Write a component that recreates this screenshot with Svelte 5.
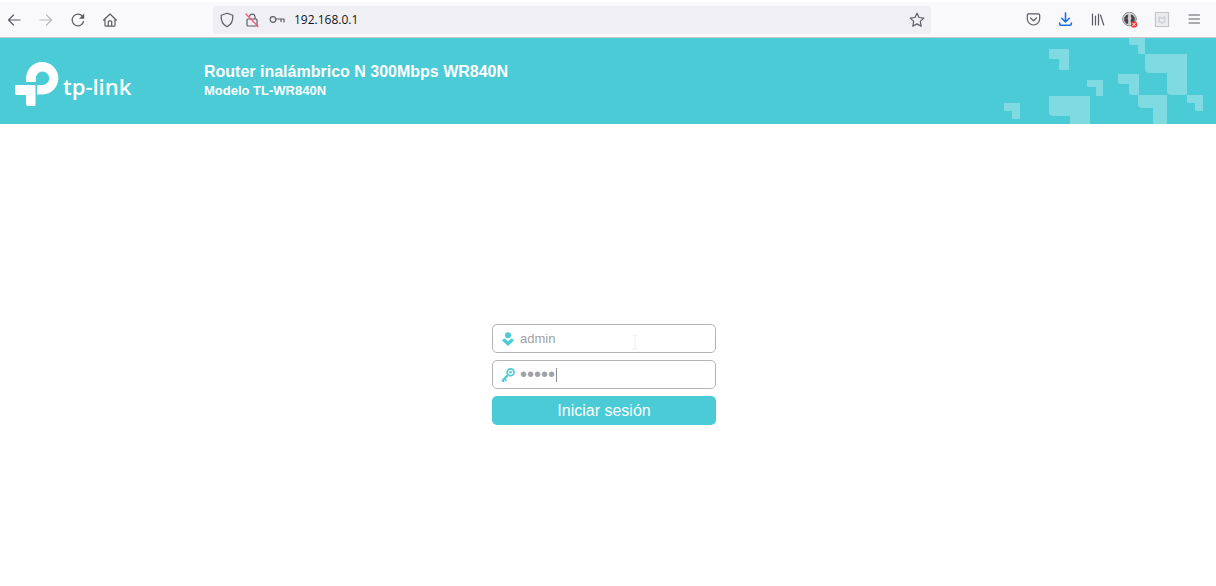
<script>
  let username = "admin";
  let password = "admin";

  const url = "192.168.0.1";

  // corner shaped tiles of the banner: left, top, right, bottom, inner x, inner y, radius
  const tiles = [
    [46, 11, 66, 32, 56, 21, 1],
    [84, 42, 100, 58, 93, 49, 1],
    [1, 65, 17, 81, 9, 73, 1],
    [46, 58, 87, 90, 67, 78, 4],
    [126, -2, 142, 16, 135, 7, 2],
    [142, 16, 184, 57, 164, 35, 4],
    [115, 36, 136, 57, 126, 46, 2],
    [135, 57, 164, 88, 150, 70, 4],
    [184, 57, 200, 73, 192, 65, 1],
  ];

  function tilePath([l, t, r, b, x, y, q]) {
    return `M${l} ${t}H${r}V${b}H${x + q}Q${x} ${b} ${x} ${b - q}V${y}H${l + q}Q${l} ${y} ${l} ${y - q}Z`;
  }
</script>

<div class="toolbar">
  <div class="group">
    <button type="button" aria-label="Atrás">
      <svg viewBox="0 0 16 16"><path d="M14 8H2.500M7.500 3L2.500 8l5 5" /></svg>
    </button>
    <button type="button" aria-label="Adelante" disabled>
      <svg viewBox="0 0 16 16"><path d="M2 8h11.500M8.500 3l5 5-5 5" /></svg>
    </button>
    <button type="button" aria-label="Recargar">
      <svg viewBox="0 0 16 16">
        <path d="M13.600 9.500A5.800 5.800 0 1 1 12.400 4.200" />
        <path class="solid" d="M14.200 1.500v5.200H9z" />
      </svg>
    </button>
    <button type="button" aria-label="Inicio">
      <svg viewBox="0 0 16 16">
        <path d="M1.500 8.200L8 2l6.500 6.200M3 7v6.200q0 1 1 1h8q1 0 1-1V7M6.300 14V9.800q0-1 1-1h1.400q1 0 1 1V14" />
      </svg>
    </button>
  </div>

  <div class="urlbar">
    <svg viewBox="0 0 16 16">
      <path d="M8 1.200L13.800 3.200C14.200 8.500 12.500 12.500 8 14.800 3.500 12.500 1.800 8.500 2.200 3.200Z" />
    </svg>
    <svg viewBox="0 0 16 16">
      <path d="M5.500 4.200a2.800 2.800 0 0 1 5.500 .500V7M4 7h8q1 0 1 1v5q0 1-1 1H4q-1 0-1-1V8q0-1 1-1Z" />
      <path class="strike" d="M2 2l12 12.500" />
    </svg>
    <svg viewBox="0 0 16 16">
      <circle cx="4" cy="7.500" r="2.800" />
      <path d="M7 7h8v3M12 7v2.500" />
    </svg>
    <input type="text" value={url} aria-label="Dirección" />
    <button type="button" aria-label="Añadir a marcadores">
      <svg viewBox="0 0 16 16">
        <path d="M8 1.200l2 4.300 4.800.600-3.500 3.300.900 4.800L8 11.900l-4.200 2.300.900-4.800L1.200 6.100 6 5.500Z" />
      </svg>
    </button>
  </div>

  <div class="group">
    <button type="button" aria-label="Guardar en Pocket">
      <svg viewBox="0 0 16 16">
        <path d="M2.500 1.800h10q1.200 0 1.200 1.200V6.800a6.200 6.200 0 0 1-12.400 0V3q0-1.200 1.200-1.200ZM4.500 6l3 2.800 3-2.800" />
      </svg>
    </button>
    <button type="button" class="download" aria-label="Descargas">
      <svg viewBox="0 0 16 16"><path d="M7.500 1v9M3.700 6.300l3.800 3.700 3.800-3.700M1.700 11v1q0 1.300 1.300 1.300h9q1.300 0 1.300-1.300v-1" /></svg>
    </button>
    <button type="button" aria-label="Biblioteca">
      <svg viewBox="0 0 16 16"><path d="M2.500 2v11M5.500 4v9M8.500 2v11M10.500 3l3.200 10" /></svg>
    </button>
    <button type="button" aria-label="Complemento">
      <svg viewBox="0 0 16 16">
        <circle class="rim" cx="7.500" cy="7" r="6.800" />
        <path class="dark" d="M6.200 2.500v2l-.700 2 .7 1v4L4.500 12 2.300 9V5.500L4.200 3ZM8.800 2.500v2l.7 2-.7 1v3l1.500 1L12.700 9V5.500L10.800 3Z" />
        <rect class="alert" x="9" y="9.500" width="6" height="6" rx="2" />
        <path class="cross" d="M10.700 11.200l2.600 2.600M13.300 11.200l-2.600 2.600" />
      </svg>
    </button>
    <button type="button" class="shield" aria-label="Protección web">
      <svg viewBox="0 0 16 16">
        <path d="M1.500.500h13v14h-13Z" />
        <path class="mark" d="M5.200 5v4.500L8 11 10.800 9.500V5L8 6.300Z" />
      </svg>
    </button>
    <button type="button" aria-label="Menú">
      <svg viewBox="0 0 16 16"><path d="M3 3h10.500M3 7h10.500M3 11h10.500" /></svg>
    </button>
  </div>
</div>

<header>
  <div class="logo">
    <svg viewBox="0 0 44 44">
      <path
        d="M11 20V16.500A16.200 16.200 0 1 1 27.500 32.500H22V24Q22 23 23 23H27.500A6.700 6.700 0 1 0 20.800 16.500V20Z"
      />
      <path d="M1 23H19.500Q20.500 23 20.500 24V43Q20.500 44 19.500 44H13Q11 44 11 42V33H2Q0 33 0 31V24Q0 23 1 23Z" />
    </svg>
    <span>tp-link</span>
  </div>
  <div class="titles">
    <h1>Router inalámbrico N 300Mbps WR840N</h1>
    <h2>Modelo TL-WR840N</h2>
  </div>
  <svg class="pattern" viewBox="0 0 200 86">
    {#each tiles as tile}
      <path d={tilePath(tile)} />
    {/each}
  </svg>
</header>

<main>
  <form on:submit|preventDefault>
    <label class="field">
      <svg viewBox="0 0 14 14">
        <circle cx="7" cy="3.200" r="3" />
        <path d="M3.300 6.300L7 9.300l3.700-3L13 8.500 7 14 1 8.500Z" />
      </svg>
      <input type="text" bind:value={username} aria-label="Usuario" />
      <svg class="ibeam" viewBox="0 0 8 16"><path d="M1 1h2l1 1 1-1h2M4 2v12M1 15h2l1-1 1 1h2" /></svg>
    </label>
    <label class="field">
      <svg viewBox="0 0 14 14">
        <path
          fill-rule="evenodd"
          d="M9.600 0a4.300 4.300 0 1 1 0 8.600 4.300 4.300 0 0 1 0-8.600ZM9.600 1.700a2.600 2.600 0 1 0 0 5.200 2.600 2.600 0 0 0 0-5.200Z"
        />
        <circle cx="9.600" cy="4.300" r="1.300" />
        <path d="M5.700 6.500L7.400 8.200 4.700 10.900 6 12.200 4.800 13.400 3.500 12.100 2.800 12.800 4 14H1.800L.300 12.400Z" />
      </svg>
      <input type="password" bind:value={password} aria-label="Contraseña" />
      <span class="caret"></span>
    </label>
    <button type="submit">Iniciar sesión</button>
  </form>
</main>

<style>
  :global(body) {
    margin: 0;
    background: white;
    font-family: "Liberation Sans", Arial, sans-serif;
  }

  button,
  input {
    margin: 0;
    padding: 0;
    border: 0;
    outline: none;
    background: none;
    font-family: inherit;
  }

  .toolbar {
    display: flex;
    align-items: center;
    gap: 95px;
    height: 35px;
    padding: 0 14px 0 6px;
    border-top: 2px solid white;
    border-bottom: 1px solid #c8c8cc;
    background: #f9f9fb;
  }

  .toolbar svg {
    display: block;
    flex: none;
    width: 16px;
    height: 16px;
    fill: none;
    stroke: #5b5b66;
    stroke-width: 1.2;
    stroke-linecap: round;
    stroke-linejoin: round;
  }

  .toolbar .solid {
    fill: #5b5b66;
    stroke: none;
  }

  .toolbar button:disabled {
    opacity: 0.4;
  }

  .group {
    display: flex;
    gap: 16px;
  }

  .urlbar {
    flex: 1;
    display: flex;
    align-items: center;
    gap: 9px;
    height: 28px;
    padding: 0 6px;
    border-radius: 3px;
    background: #f0f0f4;
  }

  .urlbar input {
    flex: 1;
    min-width: 0;
    height: 20px;
    color: #15141a;
    font-family: "Open Sans", "Noto Sans", sans-serif;
    font-size: 12px;
  }

  .toolbar .strike {
    stroke: #ff4f6e;
  }

  .toolbar .download svg {
    stroke: #1a6fe8;
    stroke-width: 1.6;
  }

  .toolbar .rim {
    fill: #d4d4d4;
    stroke: #8a8a8a;
    stroke-width: 1;
  }

  .toolbar .dark {
    fill: #48484c;
    stroke: none;
  }

  .toolbar .alert {
    fill: #ee3338;
    stroke: none;
  }

  .toolbar .cross {
    stroke: white;
    stroke-width: 1;
  }

  .toolbar .shield svg {
    fill: #ececee;
    stroke: #c2c5ca;
  }

  .toolbar .mark {
    fill: none;
    stroke: #cfd1d5;
    stroke-width: 1.6;
  }

  header {
    display: flex;
    align-items: center;
    height: 86px;
    padding: 0 13px 0 15px;
    background: #4acbd6;
    color: white;
  }

  .logo {
    display: flex;
    align-items: center;
    gap: 4px;
    width: 189px;
    padding-top: 6px;
    font-family: "Open Sans", "Noto Sans", sans-serif;
    font-size: 22px;
    line-height: 30px;
    font-weight: 600;
  }

  .logo svg {
    width: 44px;
    height: 44px;
    fill: white;
  }

  .logo span {
    padding-top: 4px;
  }

  h1,
  h2 {
    margin: 0;
    font-weight: bold;
  }

  h1 {
    font-size: 16px;
    line-height: 20px;
  }

  h2 {
    font-size: 13px;
    line-height: 18px;
  }

  .pattern {
    width: 200px;
    height: 86px;
    margin-left: auto;
    fill: #80dae1;
  }

  main {
    display: flex;
    justify-content: center;
    padding: 200px 8px 40px 0;
  }

  form {
    display: flex;
    flex-direction: column;
    gap: 7px;
    width: 224px;
  }

  .field {
    position: relative;
    display: flex;
    align-items: center;
    gap: 5px;
    box-sizing: border-box;
    height: 29px;
    padding: 0 8px;
    border: 1px solid #b4b4b8;
    border-radius: 5px;
  }

  .field svg {
    flex: none;
    width: 14px;
    height: 14px;
    fill: #4acbd6;
  }

  .field input {
    flex: 1;
    min-width: 0;
    height: 24px;
    color: #a0a1a6;
    font-size: 13px;
  }

  .field input[type="password"] {
    font-size: 20px;
  }

  .field .ibeam {
    position: absolute;
    left: 138px;
    top: 9px;
    width: 8px;
    height: 16px;
    fill: none;
    stroke: #f0f0f0;
  }

  .caret {
    position: absolute;
    left: 63px;
    top: 7px;
    width: 1px;
    height: 14px;
    background: #8c8c92;
  }

  form button {
    height: 29px;
    border-radius: 5px;
    background: #4acbd6;
    color: white;
    font-size: 16px;
    cursor: pointer;
  }
</style>
